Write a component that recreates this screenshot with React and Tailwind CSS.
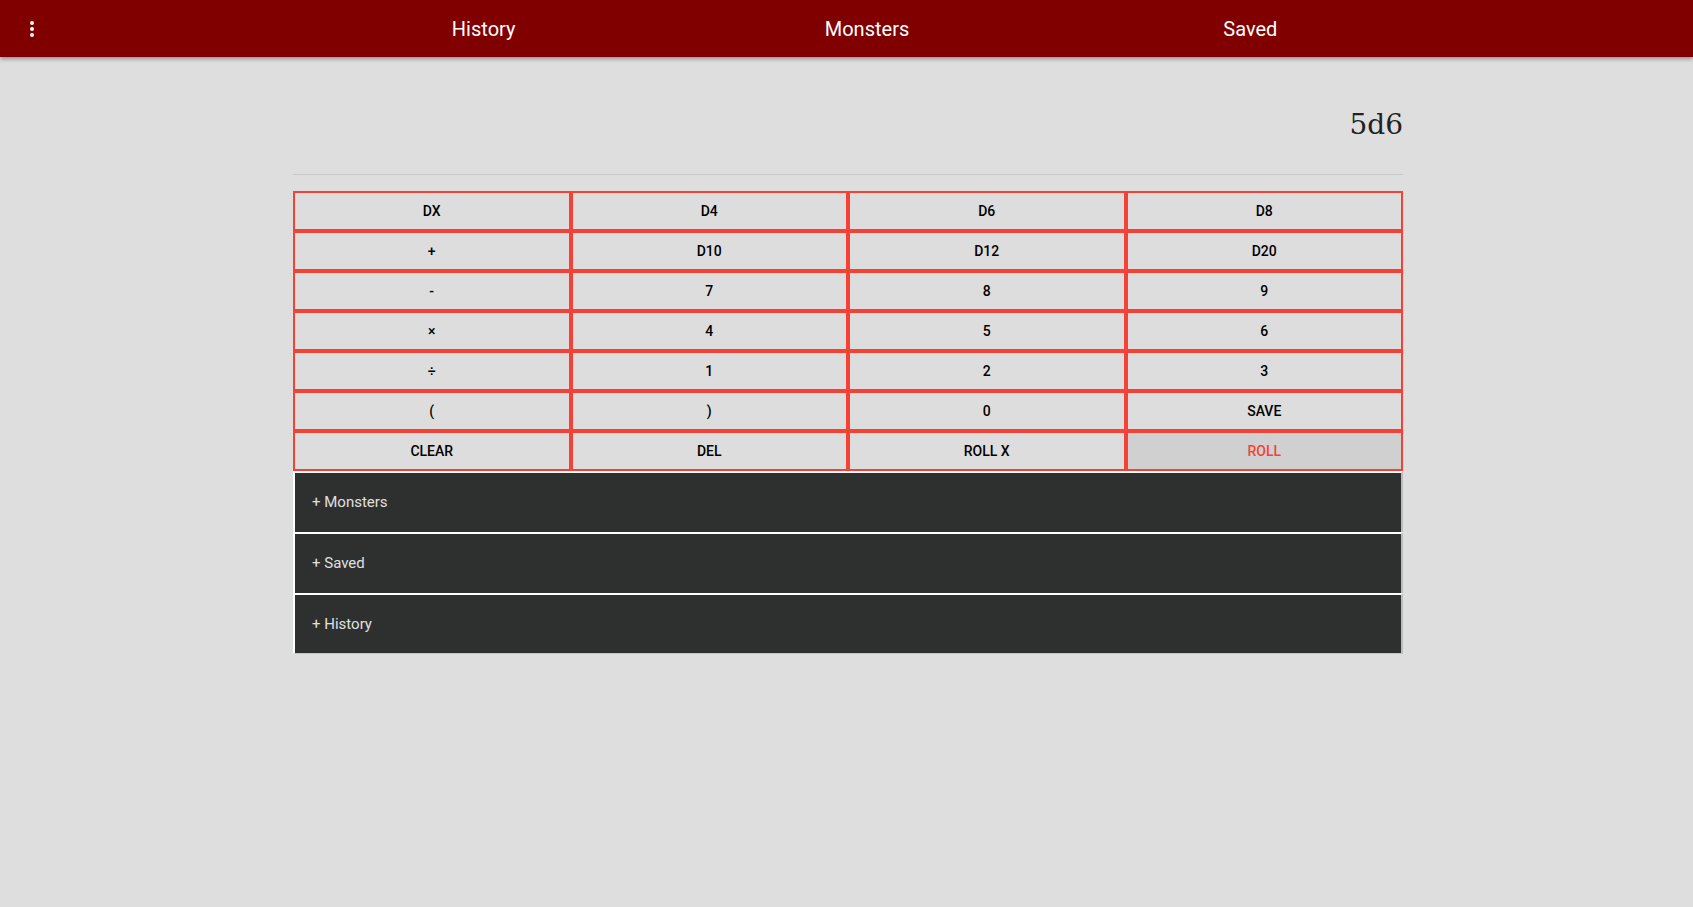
import { useState } from "react";

const keys = [
  ["DX", "D4", "D6", "D8"],
  ["+", "D10", "D12", "D20"],
  ["-", "7", "8", "9"],
  ["×", "4", "5", "6"],
  ["÷", "1", "2", "3"],
  ["(", ")", "0", "SAVE"],
  ["CLEAR", "DEL", "ROLL X", "ROLL"],
];

const panels = ["Monsters", "Saved", "History"];

export default function App() {
  const [expr] = useState("5d6");

  return (
    <div className="min-h-screen bg-[#dedede] font-['Roboto',sans-serif]">
      <header className="h-[57px] bg-[#800000] flex items-center shadow-[0_2px_4px_rgba(0,0,0,0.35)]">
        <button className="w-[64px] h-full flex flex-col items-center justify-center gap-[2px]">
          <span className="w-[4px] h-[4px] rounded-full bg-white" />
          <span className="w-[4px] h-[4px] rounded-full bg-white" />
          <span className="w-[4px] h-[4px] rounded-full bg-white" />
        </button>
        <nav className="ml-[228px] w-[1150px] grid grid-cols-3 text-xl text-white">
          <a className="text-center">History</a>
          <a className="text-center">Monsters</a>
          <a className="text-center">Saved</a>
        </nav>
      </header>

      <main className="w-[1110px] ml-[293px]">
        <div className="pt-[54px] pb-[35px] border-b border-[#c8c8c8] flex justify-end">
          <span className="text-[28px] leading-none text-[#222] font-['DejaVu_Serif',serif]">{expr}</span>
        </div>

        <div className="mt-[16px] grid grid-cols-4">
          {keys.flat().map((k) => (
            <button
              key={k}
              className={
                "h-[40px] border-2 border-[#f44336] text-sm font-medium flex items-center justify-center " +
                (k === "ROLL" ? "bg-[#d0d0d0] text-[#f44336]" : "bg-[#dddddd] text-black")
              }
            >
              {k}
            </button>
          ))}
        </div>

        <div className="flex flex-col">
          {panels.map((p, i) => (
            <div
              key={p}
              className={
                "h-[61px] bg-[#2e3030] border-t-2 border-l-2 border-white border-r-2 border-r-[#bdbdbd] pl-[17px] flex items-center text-[15px] text-[#e0e0e0] " +
                (i === panels.length - 1 ? "border-b border-b-[#c4c4c4]" : "")
              }
            >
              + {p}
            </div>
          ))}
        </div>
      </main>
    </div>
  );
}
